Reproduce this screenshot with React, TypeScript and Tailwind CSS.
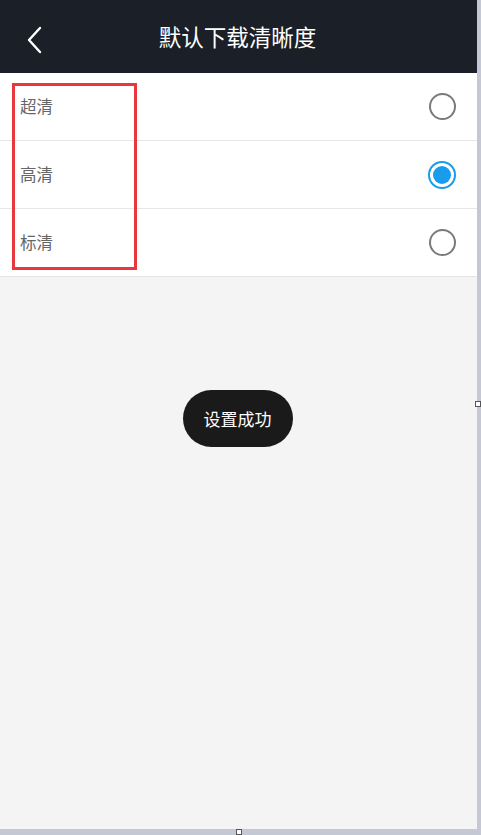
const options = [
  { id: "super", label: "超清" },
  { id: "high", label: "高清" },
  { id: "standard", label: "标清" },
];

const font = "font-['Noto_Sans_CJK_SC','Noto_Sans',sans-serif]";

function Radio({ checked }: { checked: boolean }) {
  if (checked) {
    return (
      <span className="flex h-[28px] w-[28px] items-center justify-center rounded-full border-2 border-[#1a9cec] bg-white">
        <span className="h-[18px] w-[18px] rounded-full bg-[#1a9cec]" />
      </span>
    );
  }
  return <span className="h-[27px] w-[27px] rounded-full border-2 border-[#7a7a7a] bg-white" />;
}

export default function App() {
  const selected = "high";

  return (
    <div className={`flex h-[835px] w-[481px] flex-col bg-[#c8ccd6] ${font}`}>
      <div className="flex h-[829px]">
        <div className="relative flex w-[477px] flex-col bg-[#f4f4f4]">
          {/* header */}
          <header className="relative flex h-[73px] items-center justify-center bg-[#1b1f27]">
            <button className="absolute left-[24px] top-[25px] text-white">
              <svg width="20" height="30" viewBox="0 0 20 30" fill="none">
                <polyline
                  points="16,3 5,15 16,27"
                  stroke="currentColor"
                  strokeWidth="2.4"
                  strokeLinecap="round"
                  strokeLinejoin="round"
                />
              </svg>
            </button>
            <h1 className="pr-[2px] text-[22.5px] leading-none text-white">默认下载清晰度</h1>
          </header>

          {/* options */}
          <ul className="bg-white">
            {options.map((opt) => (
              <li
                key={opt.id}
                className="flex h-[68px] items-center justify-between border-b border-[#e6e6e6] pl-[20px] pr-[21px]"
              >
                <span className="text-[16.5px] text-[#666666]">{opt.label}</span>
                <Radio checked={opt.id === selected} />
              </li>
            ))}
          </ul>

          {/* toast */}
          <div className="mt-[113px] flex justify-center pr-[2px]">
            <div className="flex h-[57px] w-[110px] items-center justify-center rounded-full bg-[#1a1a1a]">
              <span className="text-[17px] text-white">设置成功</span>
            </div>
          </div>

          {/* annotation box */}
          <div className="absolute left-[12px] top-[83px] h-[187px] w-[125px] border-[3px] border-[#e8383d]" />
          <span className="absolute right-[-4px] top-[401px] h-[6px] w-[6px] border border-[#555] bg-white" />
        </div>
        <div className="w-[4px] bg-[#c3c8d4]" />
      </div>
      <div className="relative h-[6px] bg-[#c3c8d4]">
        <span className="absolute left-[236px] top-[0px] h-[6px] w-[6px] border border-[#555] bg-white" />
      </div>
    </div>
  );
}
